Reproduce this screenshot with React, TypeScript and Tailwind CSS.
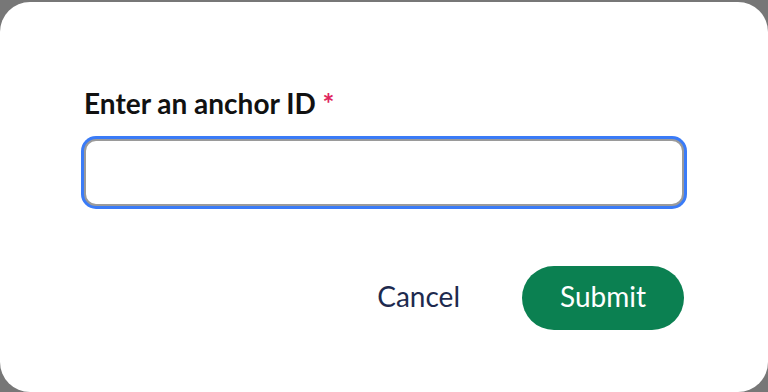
export default function App() {
  return (
    <div className="h-[392px] w-[768px] bg-[#777777] pt-[2px] overflow-hidden">
      <div
        className="h-[390px] rounded-[30px] bg-white px-[84px] pt-[84px]"
        style={{ fontFamily: "Lato, 'Noto Sans', sans-serif" }}
      >
        <label className="block text-[28px] font-bold leading-[34px] text-[#111111]">
          Enter an anchor ID <span className="text-[#e0245e]">*</span>
        </label>
        <input
          type="text"
          className="mt-[19px] block h-[67px] w-[600px] rounded-[12px] border-2 border-[#9a9a9a] bg-white outline-none ring-[3px] ring-[#3a7bf7]"
        />
        <div className="mt-[60px] flex items-center justify-end gap-[62px]">
          <button className="pb-[4px] text-[28px] leading-[60px] text-[#1d2a4e]">Cancel</button>
          <button className="flex h-[64px] w-[162px] items-center justify-center rounded-full bg-[#0b8051] pb-[4px] text-[28px] text-white">
            Submit
          </button>
        </div>
      </div>
    </div>
  );
}
